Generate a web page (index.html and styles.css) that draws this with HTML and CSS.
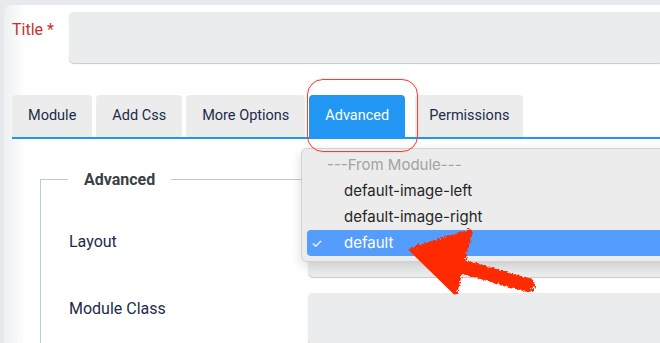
FILE: index.html
```html
<!DOCTYPE html>
<html lang="en">
<head>
  <meta charset="UTF-8" />
  <title>Module - Advanced</title>
  <link rel="stylesheet" href="styles.css">
</head>
<body>
  <div class="card">
    <div class="title-row">
      <label class="title-label">Title *</label>
      <div class="input"></div>
    </div>

    <div class="tabs">
      <div class="tab">Module</div>
      <div class="tab">Add Css</div>
      <div class="tab">More Options</div>
      <div class="tab active">Advanced</div>
      <div class="tab last">Permissions</div>
    </div>

    <div class="tab-body">
      <fieldset class="group">
        <legend>Advanced</legend>
        <div class="row">
          <div class="row-label">Layout</div>
          <div class="input"></div>
        </div>
        <div class="row">
          <div class="row-label">Module Class</div>
          <div class="input"></div>
        </div>
      </fieldset>
    </div>
  </div>

  <!-- open select menu -->
  <div class="menu">
    <div class="menu-group">---From Module---</div>
    <div class="menu-item">default-image-left</div>
    <div class="menu-item">default-image-right</div>
    <div class="menu-item selected"><span class="check">✓</span>default</div>
  </div>

  <!-- annotations -->
  <div class="highlight"></div>
  <svg class="arrow" width="660" height="343" viewBox="0 0 660 343">
    <defs>
      <filter id="rough">
        <feTurbulence type="fractalNoise" baseFrequency="0.4" numOctaves="2" result="n" />
        <feDisplacementMap in="SourceGraphic" in2="n" scale="6" />
      </filter>
    </defs>
    <g filter="url(#rough)" fill="#ff2a00" stroke="#ff2a00">
      <path d="M412 250 L470 232 L455 292 Z" stroke-width="5" stroke-linejoin="round" />
      <path d="M452 264 L528 285" stroke-width="14" stroke-linecap="round" fill="none" />
    </g>
  </svg>
</body>
</html>
```

FILE: styles.css
```css
* { box-sizing: border-box; }
body {
  margin: 0;
  height: 343px;
  overflow: hidden;
  background: #e6e9ed;
  padding: 5px 0 0 4px;
  font-family: Roboto, "Liberation Sans", sans-serif;
  color: #1b2b4b;
  position: relative;
}
.card {
  height: 338px;
  overflow: hidden;
  background: linear-gradient(to right, #eef0f2, #fff 22px);
  border-radius: 8px 0 0 0;
  padding: 7px 0 0 8px;
}
.input {
  flex: 1;
  height: 51px;
  background: #ebecee;
  border-radius: 5px 0 0 5px;
  box-shadow: 0 1px 1px rgba(0, 0, 0, 0.22);
}
.title-row {
  display: flex;
}
.title-label {
  width: 57px;
  padding-top: 8px;
  font-size: 16px;
  color: #c9302c;
}
.tabs {
  display: flex;
  gap: 4px;
  margin-top: 32px;
  border-bottom: 2px solid #2196f3;
}
.tab {
  height: 42px;
  line-height: 42px;
  padding: 0 16px;
  font-size: 14.5px;
  background: #ececec;
  border-radius: 4px 4px 0 0;
}
.tab.active {
  background: #2196f3;
  color: #fff;
  margin-right: 6px;
}
.tab.last {
  padding: 0 14px;
}
.tab-body {
  padding: 31px 0 0 28px;
}
.group {
  margin: 0;
  padding: 37px 0 0 28px;
  border: 1px solid #b8cbe0;
  border-right: none;
  border-bottom: none;
  min-width: 0;
}
.group legend {
  margin-left: -1px;
  padding: 0 16px;
  font-size: 16px;
  font-weight: bold;
  color: #3b3f45;
}
.row {
  display: flex;
  margin-bottom: 16px;
}
.row-label {
  width: 239px;
  padding-top: 6px;
  font-size: 16px;
}
.menu {
  position: absolute;
  left: 301px;
  top: 148px;
  width: 380px;
  padding: 3px 5px 5px;
  background: #ececec;
  border: 1px solid #d2d2d2;
  border-radius: 6px;
  box-shadow: 0 4px 12px rgba(0, 0, 0, 0.14);
  font-family: Inter, "Liberation Sans", sans-serif;
  font-size: 15px;
  color: #262626;
}
.menu-group,
.menu-item {
  height: 26px;
  line-height: 26px;
  border-radius: 4px;
}
.menu-group {
  padding-left: 20px;
  color: #a2a2a2;
}
.menu-item {
  padding-left: 37px;
  position: relative;
}
.menu-item.selected {
  background: #559dfc;
  color: #fff;
}
.check {
  position: absolute;
  left: 4px;
  font-size: 13px;
}
.highlight {
  position: absolute;
  left: 307px;
  top: 79px;
  width: 111px;
  height: 73px;
  border: 1.5px solid #ef4137;
  border-radius: 16px;
  box-shadow: 0 0 2px rgba(239, 65, 55, 0.3);
}
.arrow {
  position: absolute;
  left: 0;
  top: 0;
  pointer-events: none;
}
```
